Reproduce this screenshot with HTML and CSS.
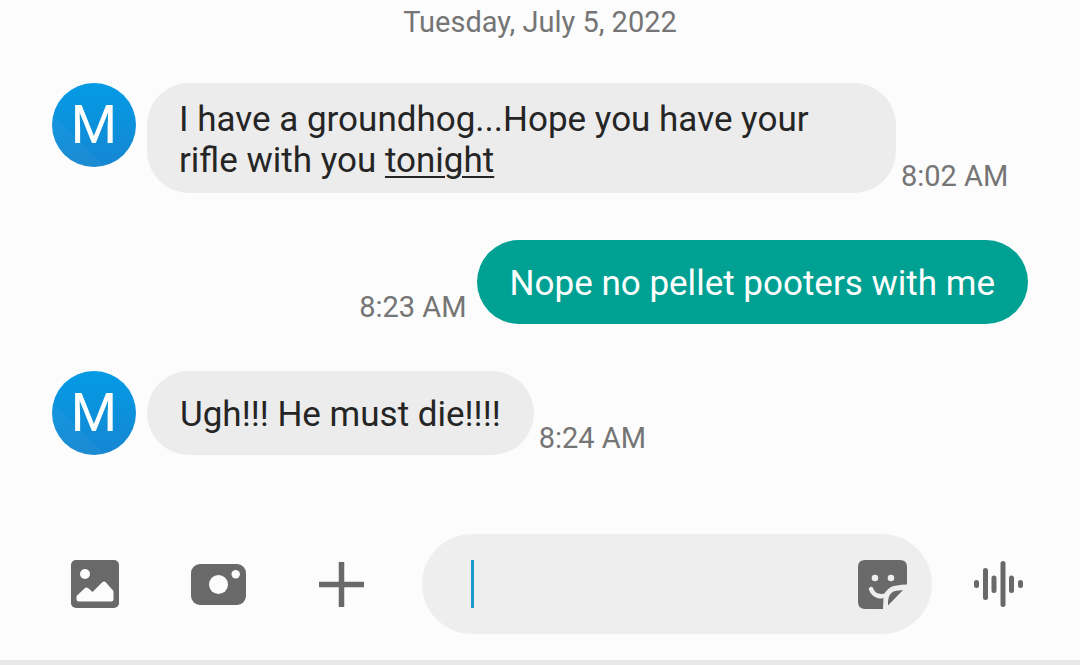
FILE: index.html
```
<!DOCTYPE html>
<html lang="en">
<head>
  <meta charset="UTF-8">
  <meta name="viewport" content="width=device-width, initial-scale=1.0">
  <title>Messages</title>
  <link rel="stylesheet" href="styles.css">
</head>
<body>

<main class="thread">
  <h1 class="date">Tuesday, July 5, 2022</h1>

  <div class="message">
    <div class="avatar">M</div>
    <p class="bubble">I have a groundhog...Hope you have your rifle with you <a href="#tonight">tonight</a></p>
    <time class="time">8:02 AM</time>
  </div>

  <div class="message sent">
    <time class="time">8:23 AM</time>
    <p class="bubble">Nope no pellet pooters with me</p>
  </div>

  <div class="message">
    <div class="avatar">M</div>
    <p class="bubble">Ugh!!! He must die!!!!</p>
    <time class="time">8:24 AM</time>
  </div>
</main>

<form class="composer">
  <button type="button" class="tool" aria-label="Gallery">
    <svg width="48" height="48" viewBox="0 0 48 48">
      <rect width="48" height="48" rx="5" fill="#696969"/>
      <circle cx="14" cy="14" r="5" fill="#fcfcfc"/>
      <path d="M5.500 36L14 28Q15.500 27 17 28L21.500 32L31.500 22Q33 20.800 34.500 22L42.500 31V39Q42.500 41.500 40 41.500H8Q5.500 41.500 5.500 39Z" fill="#fcfcfc"/>
    </svg>
  </button>
  <button type="button" class="tool" aria-label="Camera">
    <svg width="55" height="41" viewBox="0 0 55 41">
      <rect width="55" height="41" rx="9" fill="#696969"/>
      <circle cx="27.500" cy="20.500" r="9.500" fill="#fcfcfc"/>
      <circle cx="44.700" cy="10.200" r="4.200" fill="#fcfcfc"/>
    </svg>
  </button>
  <button type="button" class="tool" aria-label="Add">
    <svg width="45" height="45" viewBox="0 0 45 45">
      <path d="M22.500 0V45M0 22.500H45" stroke="#696969" stroke-width="5.500"/>
    </svg>
  </button>

  <div class="field">
    <input type="text" class="input" aria-label="Message">
    <span class="caret"></span>
    <button type="button" class="sticker" aria-label="Stickers">
      <svg width="49" height="49" viewBox="0 0 49 49">
        <path d="M7 0H42Q49 0 49 7V24.500Q37 25 33 27Q26 31 25.500 38L25 49H7Q0 49 0 42V7Q0 0 7 0Z" fill="#696969"/>
        <circle cx="17" cy="18" r="3.300" fill="#eee"/>
        <circle cx="33" cy="18" r="3.300" fill="#eee"/>
        <path d="M13 29C16 36.500 23 37.500 29 35" fill="none" stroke="#eee" stroke-width="4.500" stroke-linecap="round"/>
        <path d="M30 45.500V42Q30.500 30.500 41 30.500L45 30Z" fill="#696969"/>
      </svg>
    </button>
  </div>

  <button type="button" class="tool voice" aria-label="Voice message">
    <svg width="50" height="48" viewBox="0 0 50 48">
      <path d="M3.500 22.500V25.500M12.500 10.500V37.500M21 18V30.500M30 3.500V44.500M38.500 18V30.500M47.500 22.500V25.500" stroke="#696969" stroke-width="5" stroke-linecap="round"/>
    </svg>
  </button>
</form>

<div class="bottom-bar"></div>

</body>
</html>
```
FILE: styles.css
```
* { box-sizing: border-box; }
body {
  margin: 0;
  min-height: 100vh;
  display: flex;
  flex-direction: column;
  background: #fcfcfc;
  font-family: Roboto, "Liberation Sans", sans-serif;
  color: #252525;
}

.thread { flex: 1; padding: 5px 52px 0; }
.date { margin: 0 0 44px; font-size: 29px; line-height: 34px; font-weight: 400; text-align: center; color: #757575; }

.message { display: flex; align-items: flex-start; margin-bottom: 47px; }
.sent { justify-content: flex-end; }
.avatar {
  flex: none;
  width: 84px;
  height: 84px;
  margin-right: 11px;
  border-radius: 50%;
  background: linear-gradient(45deg, rgba(255, 255, 255, 0.03) 32%, transparent 32%), linear-gradient(#039be5, #1686d2);
  color: #fff;
  font-size: 53px;
  line-height: 84px;
  text-align: center;
}
.bubble { margin: 0; max-width: 749px; padding: 16px 32px 12px; border-radius: 42px; background: #ececec; font-size: 35px; line-height: 41px; }
.bubble a { color: inherit; text-decoration-thickness: 2px; text-underline-offset: 4px; }
.message:not(:first-of-type) .bubble { padding: 23px 33px 20px; }
.sent .bubble { background: #00a192; color: #fff; }
.time { flex: none; align-self: flex-end; margin-left: 5px; font-size: 29px; line-height: 34px; color: #757575; }
.sent .time { margin: 0 10px 0 0; }

.composer { display: flex; align-items: center; gap: 39px; padding: 0 55px 26px 53px; }
button { padding: 0; border: none; background: none; cursor: pointer; }
svg { display: block; margin: 0 auto; }
.tool { flex: none; width: 84px; height: 84px; }
.voice { width: 54px; }
.field { position: relative; flex: 1; min-width: 0; display: flex; align-items: center; height: 100px; padding: 0 25px 0 50px; border-radius: 50px; background: #eee; }
.input { flex: 1; min-width: 0; height: 60px; padding: 0; border: none; outline: none; background: none; font: inherit; font-size: 35px; caret-color: #1a9bc9; }
.caret { position: absolute; left: 49px; top: 26px; width: 3px; height: 48px; background: #1a9bc9; }
.input:focus + .caret { display: none; }
.sticker { flex: none; width: 49px; }

.bottom-bar { height: 5px; background: #e8e8e8; }
```
